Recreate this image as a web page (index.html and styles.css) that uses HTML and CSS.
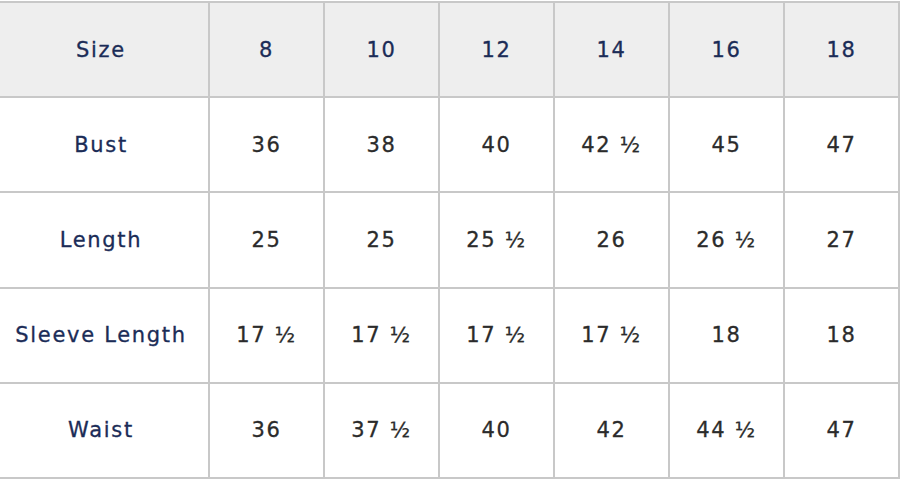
FILE: index.html
```html
<!DOCTYPE html>
<html lang="en">
<head>
<meta charset="utf-8">
<title>Size chart</title>
<link rel="stylesheet" href="styles.css">
</head>
<body>
<table class="size-chart">
  <colgroup>
    <col class="col-label">
    <col class="col-size"><col class="col-size"><col class="col-size">
    <col class="col-size"><col class="col-size"><col class="col-size">
  </colgroup>
  <thead>
    <tr>
      <th class="label">Size</th>
      <th>8</th><th>10</th><th>12</th><th>14</th><th>16</th><th>18</th>
    </tr>
  </thead>
  <tbody>
    <tr>
      <th class="label">Bust</th>
      <td>36</td><td>38</td><td>40</td><td>42 ½</td><td>45</td><td>47</td>
    </tr>
    <tr>
      <th class="label">Length</th>
      <td>25</td><td>25</td><td>25 ½</td><td>26</td><td>26 ½</td><td>27</td>
    </tr>
    <tr>
      <th class="label">Sleeve Length</th>
      <td>17 ½</td><td>17 ½</td><td>17 ½</td><td>17 ½</td><td>18</td><td>18</td>
    </tr>
    <tr>
      <th class="label">Waist</th>
      <td>36</td><td>37 ½</td><td>40</td><td>42</td><td>44 ½</td><td>47</td>
    </tr>
  </tbody>
</table>
</body>
</html>
```

FILE: styles.css
```css
html, body {
  margin: 0;
  padding: 0;
  background: #ffffff;
}

body {
  padding-top: 1px;
  font-family: "DejaVu Sans", "Noto Sans", sans-serif;
}

.size-chart {
  border-collapse: collapse;
  table-layout: fixed;
  width: 899px;
}

.col-label { width: 209px; }
.col-size { width: 115px; }

.size-chart th,
.size-chart td {
  height: 93.2px;
  padding: 0;
  text-align: center;
  vertical-align: middle;
  border: 2px solid #c8c8c8;
  font-size: 21px;
  font-weight: 400;
  letter-spacing: 1.7px;
  -webkit-text-stroke: 0.3px currentColor;
}

.size-chart th.label,
.size-chart thead th {
  color: #1b2c57;
}

.size-chart .label {
  border-left: none;
  padding-right: 6px;
}

.size-chart thead th {
  background: #eeeeee;
}

.size-chart td {
  color: #2b2b2b;
}
```
